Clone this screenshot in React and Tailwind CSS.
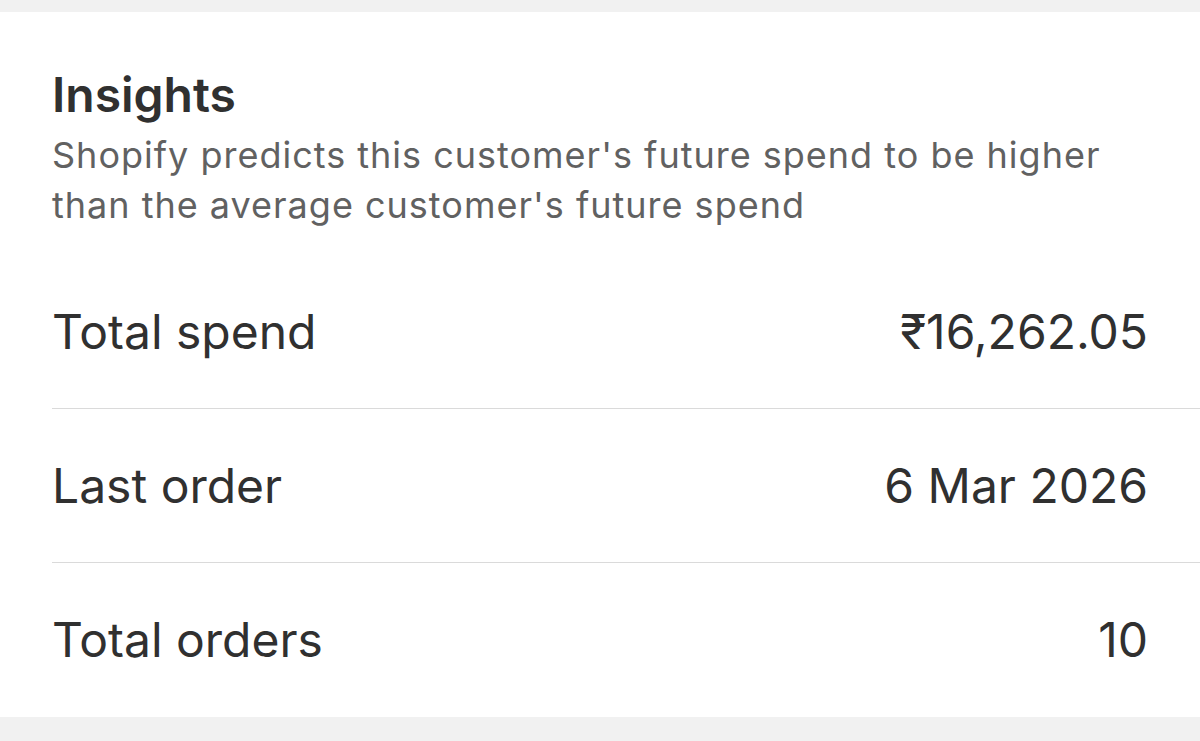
export default function App() {
  const rows = [
    { label: 'Total spend', value: '₹16,262.05' },
    { label: 'Last order', value: '6 Mar 2026' },
    { label: 'Total orders', value: '10' },
  ]

  return (
    <div
      className="min-h-[741px] bg-[#f1f1f1] pt-[12px] text-[#303030]"
      style={{ fontFamily: 'Inter, "Noto Sans", sans-serif' }}
    >
      <div className="bg-white pl-[52px]">
        <div className="pt-[57px] pr-[52px] pb-[25px]">
          <h2 className="text-[48px] leading-[52px] font-semibold">Insights</h2>
          <p className="mt-[9px] text-[36px] leading-[50px] tracking-[1px] text-[#616161]">
            Shopify predicts this customer's future spend to be higher than the average customer's future spend
          </p>
        </div>
        {rows.map((row, i) => (
          <div
            key={row.label}
            className={
              i < rows.length - 1
                ? 'flex h-[154px] items-center justify-between border-b border-[#dadada] pr-[52px]'
                : 'flex h-[154px] items-center justify-between pr-[52px]'
            }
          >
            <span className="text-[48px]">{row.label}</span>
            <span className="text-[48px]">{row.value}</span>
          </div>
        ))}
      </div>
    </div>
  )
}
